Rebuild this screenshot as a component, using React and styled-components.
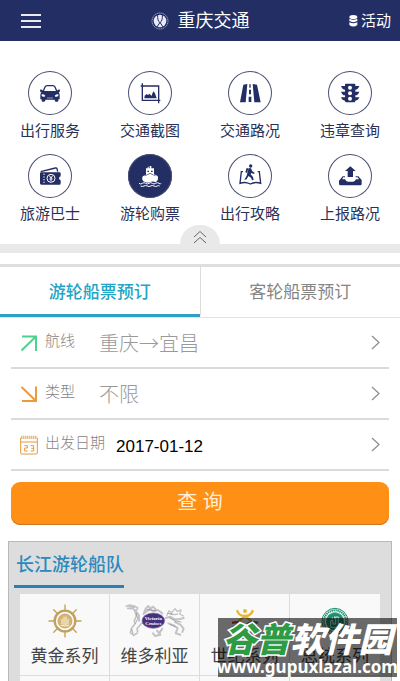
import React, { useState } from 'react'
import styled, { createGlobalStyle } from 'styled-components';


const services = [
    { name: '出行服务', icon: CarIcon },
    { name: '交通截图', icon: CropIcon },
    { name: '交通路况', icon: RoadIcon },
    { name: '违章查询', icon: LightIcon },
    { name: '旅游巴士', icon: TicketIcon },
    { name: '游轮购票', icon: ShipIcon, active: true },
    { name: '出行攻略', icon: GuideIcon },
    { name: '上报路况', icon: UploadIcon },
]

const fleets = [
    { name: '黄金系列', logo: WheelLogo },
    { name: '维多利亚', logo: VictoriaLogo },
    { name: '世纪系列', logo: CenturyLogo },
    { name: '总统系列', logo: PresidentLogo },
]

const tabs = ['游轮船票预订', '客轮船票预订']

function App() {
    const [tab, setTab] = useState(0)
    const [date, setDate] = useState('2017-01-12')

    return (
        <Page>
            <GlobalStyle />
            <Header>
                <MenuButton aria-label="菜单">
                    <span /><span /><span />
                </MenuButton>
                <Title><BrandIcon />重庆交通</Title>
                <EventLink href="#events"><CoinsIcon />活动</EventLink>
            </Header>

            <Services>
                {services.map(({ name, icon: Icon, active }) => (
                    <Service key={name} href="#service">
                        <Circle $active={active}><Icon /></Circle>
                        {name}
                    </Service>
                ))}
            </Services>
            <Handle aria-label="收起">
                <svg width="14" height="14" viewBox="0 0 14 14" fill="none" stroke="#666" strokeWidth="1">
                    <path d="M1 7L7 1.5L13 7M1 13L7 7.5L13 13" />
                </svg>
            </Handle>
            <Bar />

            <Tabs role="tablist">
                {tabs.map((name, i) => (
                    <Tab key={name} role="tab" aria-selected={tab === i} $active={tab === i} onClick={() => setTab(i)}>
                        {name}
                    </Tab>
                ))}
            </Tabs>

            <Form onSubmit={e => e.preventDefault()}>
                <Row>
                    <svg width="18" height="18" viewBox="0 0 18 18" fill="none" stroke="#4fd08f" strokeWidth="2">
                        <path d="M2 2.5H16V17M16 2.5L1.5 16.5" />
                    </svg>
                    <RowLabel htmlFor="route">航线</RowLabel>
                    <Select id="route"><option>重庆→宜昌</option></Select>
                    <Chevron />
                </Row>
                <Row>
                    <svg width="18" height="18" viewBox="0 0 18 18" fill="none" stroke="#eb9a3c" strokeWidth="2">
                        <path d="M2 16H16V1.5M16 16L1.5 2" />
                    </svg>
                    <RowLabel htmlFor="kind">类型</RowLabel>
                    <Select id="kind"><option>不限</option></Select>
                    <Chevron />
                </Row>
                <Row>
                    <CalendarIcon />
                    <RowLabel htmlFor="date">出发日期</RowLabel>
                    <DateInput id="date" value={date} onChange={e => setDate(e.target.value)} />
                    <Chevron />
                </Row>
                <Submit type="submit">查 询</Submit>
            </Form>

            <Fleet>
                <FleetTitle>长江游轮船队</FleetTitle>
                <FleetGrid>
                    {fleets.map(({ name, logo: Logo }) => (
                        <FleetCell key={name} href="#fleet"><Logo />{name}</FleetCell>
                    ))}
                    {fleets.map(({ name }) => <FleetCell as="div" key={name + '-next'} />)}
                </FleetGrid>
            </Fleet>

            <Stamp>
                <StampName><em>谷普</em>软件园</StampName>
                <StampLink href="#site">www.gupuxlazal.com</StampLink>
            </Stamp>
        </Page>
    )
}

export default App

function BrandIcon() {
    return (
        <svg width="18" height="18" viewBox="0 0 54 54" fill="none" stroke="#e8ebf7">
            <circle cx="27" cy="27" r="24" strokeWidth="2" strokeDasharray="4 2" />
            <circle cx="27" cy="27" r="19" fill="#e8ebf7" stroke="none" />
            <path d="M20 8C19 21 22 29 27 32C32 29 35 21 34 8M27 31L18 45M27 31L36 45" stroke="#232e64" strokeWidth="3" />
            <path d="M27 10V28" strokeWidth="5" />
        </svg>
    )
}

function CoinsIcon() {
    return (
        <svg width="9" height="12" viewBox="0 0 27 36" fill="#fff">
            <ellipse cx="13" cy="6" rx="12" ry="6" />
            <path d="M1 11Q13 17 25 11V18Q13 25 1 18ZM1 22Q13 28 25 22V30Q13 39 1 30Z" />
        </svg>
    )
}

function CarIcon() {
    return (
        <svg viewBox="0 0 132 132" fill="#232e64">
            <path d="M45 62L51 48Q53 44 57 44H75Q79 44 81 48L87 62" fill="none" stroke="#232e64" strokeWidth="4" />
            <path d="M36 56Q41 54 45 59L43 63H37ZM96 56Q91 54 87 59L89 63H95Z" />
            <path d="M43 60H89Q95 64 95 72V85H91V89Q91 92 88 92H84Q80 92 80 88V86H52V88Q52 92 48 92H44Q41 92 41 89V85H37V72Q37 64 43 60Z" />
            <path d="M41 70Q47 69 52 74L50 77Q44 78 41 75ZM91 70Q85 69 80 74L82 77Q88 78 91 75ZM57 80H75V82H57Z" fill="#fff" />
        </svg>
    )
}

function CropIcon() {
    return (
        <svg viewBox="0 0 132 132" fill="#232e64">
            <path d="M43 37V88H97M38 45H92V97" fill="none" stroke="#232e64" strokeWidth="4" />
            <path d="M49 82L50 74L56 69L60 72L65 68L70 75L76 61L81 67L86 82Z" />
        </svg>
    )
}

function RoadIcon() {
    return (
        <svg viewBox="0 0 132 132" fill="#232e64">
            <path d="M46 41L58 39L53 94H36ZM74 39L87 41L98 94H79Z" />
            <path d="M64 40H68V50H64ZM63 56H69V70H63ZM62 77H70V93H62Z" />
        </svg>
    )
}

function LightIcon() {
    return (
        <svg viewBox="0 0 132 132" fill="#232e64">
            <path d="M51 40Q51 38 54 38H79Q82 38 82 40V90Q82 94 78 94H55Q51 94 51 90ZM39 45H51V56Q43 56 39 45ZM39 62H51V73Q43 73 39 62ZM39 79H51V89Q43 89 39 79ZM94 45H82V56Q90 56 94 45ZM94 62H82V73Q90 73 94 62ZM94 79H82V89Q90 89 94 79Z" />
            <g fill="#fff">
                <circle cx="66" cy="50" r="6" />
                <circle cx="66" cy="67" r="6" />
                <circle cx="66" cy="83" r="6" />
            </g>
        </svg>
    )
}

function TicketIcon() {
    return (
        <svg viewBox="0 0 132 132" fill="#232e64">
            <path d="M38 53L82 42Q86 41 87 44L89 53" fill="none" stroke="#232e64" strokeWidth="4" />
            <path d="M40 55H95Q98 55 98 58V67Q93 68 93 73Q93 78 98 79V88Q98 92 95 92H40Q36 92 36 88V58Q36 55 40 55Z" />
            <g fill="none" stroke="#fff" strokeWidth="3">
                <path d="M48 59V88" strokeDasharray="4 4" />
                <circle cx="69" cy="73" r="12" />
                <path d="M64 65L69 72L74 65M69 72V82M64 75H74" />
            </g>
        </svg>
    )
}

function ShipIcon() {
    return (
        <svg viewBox="0 0 132 132" fill="#fff">
            <path d="M65 36H70V43H78V61L89 66Q93 77 83 85Q74 80 66 85Q57 89 46 82Q40 74 44 67L54 62V43H59V38H62V43H65Z" />
            <path d="M58 50H63V54H58ZM69 50H74V54H69ZM50 67L66 59L83 67V65L66 57L50 65Z" fill="#232e64" />
            <path d="M33 88Q38 92 43 88T53 88T63 88T73 88T83 88T93 88T99 88M38 96Q43 99 48 96T58 96T68 96T78 96T88 96T95 96" fill="none" stroke="#fff" strokeWidth="3" />
        </svg>
    )
}

function GuideIcon() {
    return (
        <svg viewBox="0 0 132 132" fill="#232e64">
            <path d="M45 53H40L36 88Q51 82 67 90Q82 82 98 88L94 53H89" fill="none" stroke="#232e64" strokeWidth="4" />
            <circle cx="68" cy="36" r="5" />
            <path d="M62 42L69 43L73 52L80 56L78 60L70 57L68 61L75 69L77 78L72 79L69 71L61 66L56 76L49 78L56 65L60 49Z" />
            <path d="M56 41L61 44L57 57L52 55Z" />
        </svg>
    )
}

function UploadIcon() {
    return (
        <svg viewBox="0 0 132 132" fill="#232e64">
            <path d="M67 37L83 51H75V69H59V51H51Z" />
            <path d="M44 67H51V70H45L43 76H51Q54 83 60 83H75Q81 83 84 76H93L89 70H83V67H91L101 78V90Q101 94 97 94H38Q33 94 33 90V80Z" />
        </svg>
    )
}

function Chevron() {
    return (
        <svg width="9" height="15" viewBox="0 0 9 15" fill="none" stroke="#8c8c8c" strokeWidth="1.2">
            <path d="M1 1L8 7.500L1 14" />
        </svg>
    )
}

function CalendarIcon() {
    return (
        <svg width="18" height="20" viewBox="0 0 54 60" fill="none" stroke="#e39a3e" strokeWidth="3">
            <path d="M2 8V54Q2 57 5 57H49Q52 57 52 54V8M2 21H52" />
            <path d="M4 7H51" strokeWidth="10" strokeDasharray="3 3" />
            <path d="M13 32H22V39H14V48H23M32 32H41V48H32M34 40H41" />
        </svg>
    )
}

function WheelLogo() {
    const spokes = [0, 45, 90, 135, 180, 225, 270, 315]
    return (
        <svg width="34" height="34" viewBox="0 0 102 102" fill="none" stroke="#c2a15d">
            {spokes.map(a => (
                <path key={a} d="M51 22V5M51 3V9" strokeWidth="4" strokeLinecap="round" transform={`rotate(${a} 51 51)`} />
            ))}
            <circle cx="51" cy="51" r="31" strokeWidth="7" />
            <circle cx="51" cy="51" r="21" fill="#d3b677" stroke="#b8965a" strokeWidth="2" />
            <path d="M42 61V45M48 63V38M54 63V38M60 61V45M38 64Q51 68 64 64" stroke="#fff4d8" strokeWidth="3" />
        </svg>
    )
}

function VictoriaLogo() {
    return (
        <svg width="60" height="34" viewBox="0 0 180 102" fill="none" stroke="#c4c2c6" strokeLinecap="round" strokeLinejoin="round">
            <path d="M4 7L14 3L30 7L38 12L35 18M8 13L25 14L30 22L34 36L28 50L30 60L20 72L16 86L26 94L36 88M38 84L36 74L46 62L56 52" strokeWidth="5" />
            <path d="M30 18L42 34L42 50M56 30L62 14L70 6L76 14L84 8L92 16M60 26L74 16L86 22L98 18L112 28" strokeWidth="6" />
            <path d="M122 42L136 38L148 46L162 46L176 42M130 58L146 64L158 72L152 88L166 92M150 54L166 62L176 74L172 84M96 80L106 92L90 96L84 88M112 74L104 86" strokeWidth="6" />
            <path d="M126 34L132 20L140 26L150 14L156 22L168 18L164 30L176 36M136 30L148 32L158 30" strokeWidth="4" />
            <path d="M12 8L28 10M34 28L38 44L32 58M66 16L78 18L92 20M134 42L150 50L168 54M136 62L150 68M128 28L142 30M20 76L24 88" stroke="#88868b" strokeWidth="2" />
            <ellipse cx="85" cy="50" rx="34" ry="23" fill="#473080" stroke="#8c78ae" strokeWidth="2" />
            <g fill="#fff" stroke="none" fontFamily="Liberation Serif, serif" fontWeight="bold" textAnchor="middle" fontSize="15">
                <text x="85" y="49">Victoria</text>
                <text x="85" y="63">Cruises</text>
            </g>
        </svg>
    )
}

function CenturyLogo() {
    return (
        <svg width="34" height="34" viewBox="0 -7 102 102" fill="none" strokeLinecap="round" strokeWidth="7">
            <g stroke="#e7b531">
                <circle cx="51" cy="14" r="6" fill="#e7b531" stroke="none" />
                <path d="M28 14Q33 29 51 29Q68 29 74 14M51 30L34 42M51 30L68 42" />
            </g>
            <g stroke="#c4422f">
                <circle cx="18" cy="64" r="6" fill="#c4422f" stroke="none" />
                <path d="M15 49Q36 44 44 55Q48 68 36 84M42 57L28 60" />
            </g>
            <g stroke="#3774ab">
                <circle cx="84" cy="64" r="6" fill="#3774ab" stroke="none" />
                <path d="M87 49Q66 44 58 55Q54 68 66 84M60 57L74 60" />
            </g>
        </svg>
    )
}

function PresidentLogo() {
    return (
        <svg width="34" height="34" viewBox="0 0 102 102" fill="none" stroke="#19916f">
            <circle cx="51" cy="52" r="39" strokeWidth="3" />
            <circle cx="51" cy="52" r="33" strokeWidth="6" strokeDasharray="4 2" />
            <circle cx="51" cy="52" r="26" fill="#19916f" strokeWidth="2" />
            <path d="M38 65V50H45V60H53V39H61V67Q49 76 35 68M43 40V46M50 37V44" stroke="#d3eee4" strokeWidth="3" />
        </svg>
    )
}

const GlobalStyle = createGlobalStyle`
    * {
        box-sizing: border-box;
    }
    body {
        margin: 0;
        background-color: white;
        font-family: "Liberation Sans", "Noto Sans CJK SC", sans-serif;
    }
    button, input, select {
        font-family: inherit;
        margin: 0;
        padding: 0;
        border: none;
        background: none;
    }
    a {
        text-decoration: none;
    }
    svg {
        flex: none;
        display: block;
    }
`
const Page = styled.div`
    position: relative;
    display: flex;
    flex-direction: column;
    min-height: 100vh;
`
const Header = styled.header`
    display: grid;
    grid-template-columns: 1fr auto 1fr;
    align-items: center;
    height: 41px;
    padding: 0 9px;
    background-color: #232e64;
    color: white;
`
const MenuButton = styled.button`
    display: flex;
    flex-direction: column;
    gap: 4px;
    width: 20px;
    margin-left: 12px;

    span {
        height: 2px;
        background-color: #e9ebf3;
    }
`
const Title = styled.h1`
    display: flex;
    align-items: center;
    gap: 9px;
    margin: 0;
    font-size: 18px;
    font-weight: 400;
    line-height: 20px;
`
const EventLink = styled.a`
    display: flex;
    justify-content: flex-end;
    align-items: center;
    gap: 3px;
    color: white;
    font-size: 15px;
    line-height: 20px;
`
const Services = styled.nav`
    display: grid;
    grid-template-columns: repeat(4, 1fr);
    row-gap: 13px;
    padding: 30px 0 1px;
`
const Service = styled.a`
    display: flex;
    flex-direction: column;
    align-items: center;
    gap: 6px;
    color: #2a3157;
    font-size: 15px;
    line-height: 20px;
`
const Circle = styled.span`
    width: 44px;
    height: 44px;
    border-radius: 50%;
    background-color: ${props => props.$active ? '#232e64' : 'white'};
    box-shadow: inset 0 0 0 1px #4a5070;

    svg {
        width: 100%;
        height: 100%;
    }
`
const Handle = styled.button`
    display: flex;
    justify-content: center;
    align-items: flex-end;
    align-self: center;
    width: 40px;
    height: 19px;
    border-radius: 20px 20px 0 0;
    background-color: #e9e9e9;
`
const Bar = styled.div`
    height: 9px;
    background-color: #e9e9e9;
`
const Tabs = styled.div`
    display: flex;
    margin-top: 11px;
    border-top: 3px solid #dedede;
    border-bottom: 1px solid #e3e3e3;
`
const Tab = styled.button`
    flex: 1;
    height: 50px;
    border-bottom: 3px solid ${props => props.$active ? '#2f9fc4' : 'transparent'};
    color: ${props => props.$active ? '#22a5c6' : '#858585'};
    font-size: 17px;
    font-weight: ${props => props.$active ? 500 : 400};

    & + & {
        border-left: 1px solid #dcdcdc;
    }
`
const Form = styled.form`
    padding: 0 11px;
`
const Row = styled.div`
    display: flex;
    align-items: center;
    gap: 7px;
    height: 51px;
    padding: 0 9px;
    border-bottom: 2px solid #dadada;
`
const RowLabel = styled.label`
    min-width: 43px;
    margin-right: 4px;
    padding-bottom: 4px;
    color: #858585;
    font-size: 15px;
    font-weight: 300;
    line-height: 20px;
`
const Select = styled.select`
    flex: 1;
    min-width: 0;
    appearance: none;
    color: #999;
    font-family: "Noto Sans CJK SC", sans-serif;
    font-size: 20px;
    font-weight: 300;
`
const DateInput = styled.input`
    flex: 1;
    min-width: 0;
    padding-top: 4px;
    color: black;
    font-size: 17px;
`
const Submit = styled.button`
    width: 100%;
    height: 43px;
    margin-top: 11px;
    padding-bottom: 6px;
    border-radius: 9px;
    background-color: #ff8f15;
    box-shadow: inset 0 -1px 0 #c97820;
    color: #fff0d6;
    font-size: 20px;
`
const Fleet = styled.section`
    flex: 1;
    display: flex;
    flex-direction: column;
    margin: 16px 8px 0;
    border: 1px solid #b9b9b9;
    border-bottom: none;
    background-color: #dedddd;
`
const FleetTitle = styled.h2`
    align-self: flex-start;
    margin: 9px 5px 6px;
    padding: 0 0 6px 2px;
    border-bottom: 3px solid #2a81b4;
    color: #2a8abf;
    font-size: 18px;
    font-weight: 500;
    line-height: 28px;
`
const FleetGrid = styled.div`
    flex: 1;
    display: grid;
    grid-template-columns: repeat(4, 1fr);
    grid-template-rows: 82px 1fr;
    margin: 0 11px;
    background-color: #f9f9f9;
`
const FleetCell = styled.a`
    display: flex;
    flex-direction: column;
    align-items: center;
    gap: 7px;
    color: #444;
    font-size: 17px;
    line-height: 24px;
    border-right: 1px solid #dcdcdc;

    &:nth-child(4n) {
        border-right: none;
    }
    &:nth-child(-n+4) {
        padding-top: 10px;
        border-bottom: 1px solid #dcdcdc;
    }
`
const Stamp = styled.div`
    position: absolute;
    right: 3px;
    bottom: 4px;
    width: 179px;
    height: 59px;
    display: flex;
    flex-direction: column;
    align-items: center;
    background-color: rgba(0, 0, 0, 0.58);
    color: white;
    white-space: nowrap;
`
const StampName = styled.strong`
    padding-top: 4px;
    font-size: 34px;
    font-style: italic;
    font-weight: 900;
    line-height: 36px;

    em {
        color: #2f9a45;
        -webkit-text-stroke: 3px white;
        paint-order: stroke fill;
    }
`
const StampLink = styled.a`
    color: white;
    font-family: "Noto Sans", sans-serif;
    font-size: 17px;
    font-weight: 700;
    line-height: 18px;
`
